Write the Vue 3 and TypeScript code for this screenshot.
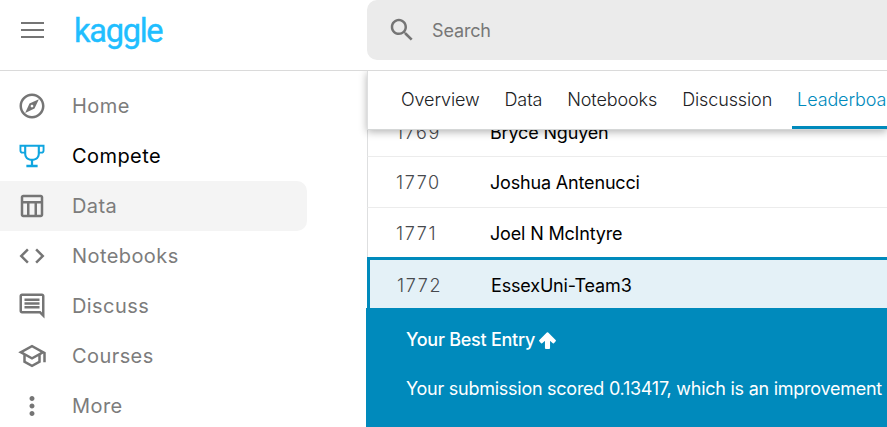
<script setup lang="ts">
interface NavItem {
  label: string
  icon: string
  state?: 'active' | 'hover'
}

interface Row {
  rank: number
  team: string
  own?: boolean
}

const navItems: NavItem[] = [
  {
    label: 'Home',
    icon: 'M12 2C6.48 2 2 6.48 2 12s4.48 10 10 10 10-4.48 10-10S17.52 2 12 2zm0 18c-4.41 0-8-3.59-8-8s3.59-8 8-8 8 3.59 8 8-3.59 8-8 8zm-5.5-2.5l7.51-3.49L17.5 6.5 9.99 9.99 6.5 17.5zm5.5-6.6c.61 0 1.1.49 1.1 1.1s-.49 1.1-1.1 1.1-1.1-.49-1.1-1.1.49-1.1 1.1-1.1z',
  },
  {
    label: 'Compete',
    state: 'active',
    icon: 'M2 3H22V7.5A2.5 2.5 0 0 1 19.5 10H18.3C18.2 13.4 16 15.6 12.9 15.8V19H16.5V21H7.5V19H11.1V15.8C8 15.6 5.8 13.4 5.7 10H4.5A2.5 2.5 0 0 1 2 7.5ZM7.4 4.6V10C7.4 12.7 9.1 14.2 12 14.2S16.6 12.7 16.6 10V4.6ZM3.5 4.6V7.5Q3.5 8.5 4.5 8.5H5.7V4.6ZM18.3 4.6V8.5H19.5Q20.5 8.5 20.5 7.5V4.6Z',
  },
  {
    label: 'Data',
    state: 'hover',
    icon: 'M19 3H5c-1.1 0-2 .9-2 2v14c0 1.1.9 2 2 2h14c1.1 0 2-.9 2-2V5c0-1.1-.9-2-2-2zm0 2v3H5V5h14zm-5 14h-4v-9h4v9zM5 10h3v9H5v-9zm11 9v-9h3v9h-3z',
  },
  {
    label: 'Notebooks',
    icon: 'M9.4 16.6L4.8 12l4.6-4.6L8 6l-6 6 6 6 1.4-1.4zm5.2 0l4.6-4.6-4.6-4.6L16 6l6 6-6 6-1.4-1.4z',
  },
  {
    label: 'Discuss',
    icon: 'M21.99 4c0-1.1-.89-2-1.99-2H4c-1.1 0-2 .9-2 2v12c0 1.1.9 2 2 2h14l4 4-.01-18zM20 4v13.17L18.83 16H4V4h16zM6 12h12v2H6zm0-3h12v2H6zm0-3h12v2H6z',
  },
  {
    label: 'Courses',
    icon: 'M12 3L1 9l4 2.18v6L12 21l7-3.82v-6l2-1.09V17h2V9L12 3zm6.82 6L12 12.72 5.18 9 12 5.28 18.82 9zM17 15.99l-5 2.73-5-2.73v-3.72L12 15l5-2.73v3.72z',
  },
  {
    label: 'More',
    icon: 'M12 8c1.1 0 2-.9 2-2s-.9-2-2-2-2 .9-2 2 .9 2 2 2zm0 2c-1.1 0-2 .9-2 2s.9 2 2 2 2-.9 2-2-.9-2-2-2zm0 6c-1.1 0-2 .9-2 2s.9 2 2 2 2-.9 2-2-.9-2-2-2z',
  },
]

const tabs: string[] = ['Overview', 'Data', 'Notebooks', 'Discussion', 'Leaderboard']
const activeTab = 'Leaderboard'

const rows: Row[] = [
  { rank: 1769, team: 'Bryce Nguyen' },
  { rank: 1770, team: 'Joshua Antenucci' },
  { rank: 1771, team: 'Joel N McIntyre' },
  { rank: 1772, team: 'EssexUni-Team3', own: true },
]
</script>

<template>
  <div class="page">
    <header class="header">
      <div class="brand">
        <svg class="menu" viewBox="0 0 24 18" aria-hidden="true">
          <path d="M1 2h23M1 9h23M1 16h23" />
        </svg>
        <span class="logo">kaggle</span>
      </div>
      <div class="search">
        <svg class="search-icon" viewBox="0 0 24 24" aria-hidden="true">
          <path d="M15.5 14h-.79l-.28-.27C15.41 12.59 16 11.11 16 9.5 16 5.91 13.09 3 9.5 3S3 5.91 3 9.5 5.91 16 9.5 16c1.61 0 3.09-.59 4.23-1.57l.27.28v.79l5 4.99L20.49 19l-4.99-5zm-6 0C7.01 14 5 11.99 5 9.5S7.01 5 9.5 5 14 7.01 14 9.5 11.99 14 9.5 14z" />
        </svg>
        <span class="search-label">Search</span>
      </div>
    </header>

    <div class="body">
      <nav class="sidebar">
        <a v-for="item in navItems" :key="item.label" class="nav-item" :class="item.state">
          <svg class="nav-icon" viewBox="0 0 24 24" aria-hidden="true">
            <path :d="item.icon" fill-rule="evenodd" />
          </svg>
          <span>{{ item.label }}</span>
        </a>
      </nav>

      <main class="main">
        <div class="tabs">
          <a v-for="tab in tabs" :key="tab" class="tab" :class="{ selected: tab === activeTab }">{{ tab }}</a>
        </div>
        <div class="board">
          <div v-for="row in rows" :key="row.rank" class="row" :class="{ own: row.own }">
            <span class="rank">{{ row.rank }}</span>
            <span class="team">{{ row.team }}</span>
          </div>
        </div>
        <section class="best">
          <p class="best-title">
            <span>Your Best Entry</span>
            <svg class="arrow" viewBox="0 0 16 16" aria-hidden="true">
              <path d="M8 1.2L15 8.2L13.6 9.8L9.5 6.4V15H6.5V6.4L2.4 9.8L1 8.2Z" />
            </svg>
          </p>
          <p class="best-text">Your submission scored 0.13417, which is an improvement</p>
        </section>
      </main>
    </div>
  </div>
</template>

<style>
body {
  margin: 0;
  background: #fff;
}
</style>

<style scoped>
.page {
  width: 100%;
  height: 427px;
  display: flex;
  flex-direction: column;
  overflow: hidden;
  background: #fff;
  font-family: Inter, "Liberation Sans", sans-serif;
}

.header {
  flex: none;
  display: flex;
  height: 70px;
  border-bottom: 1px solid #dadada;
}

.brand {
  flex: none;
  box-sizing: border-box;
  width: 367px;
  height: 60px;
  padding-left: 20px;
  display: flex;
  align-items: center;
}

.menu {
  width: 24px;
  height: 18px;
  fill: none;
  stroke: #757575;
  stroke-width: 2.2;
}

.logo {
  margin-left: 30px;
  padding-top: 1px;
  color: #20beff;
  font-family: Roboto, sans-serif;
  font-size: 32.5px;
  line-height: 58px;
  letter-spacing: -1.25px;
  -webkit-text-stroke: 0.4px #20beff;
}

.search {
  flex: 1;
  height: 60px;
  display: flex;
  align-items: center;
  border-radius: 10px 0 0 10px;
  background: #ebebeb;
}

.search-icon {
  width: 30px;
  height: 30px;
  margin-left: 20px;
  fill: #757575;
}

.search-label {
  margin-left: 15px;
  color: #777;
  font-size: 18px;
  letter-spacing: -0.15px;
}

.body {
  flex: 1;
  min-height: 0;
  display: flex;
}

.sidebar {
  flex: none;
  width: 366px;
  padding-top: 10px;
  box-sizing: border-box;
}

.nav-item {
  box-sizing: border-box;
  display: flex;
  align-items: center;
  width: 307px;
  height: 50px;
  padding-left: 17px;
  border-radius: 0 10px 10px 0;
  color: #7c7c7c;
  font-size: 20px;
  letter-spacing: 0.42px;
}

.nav-item.active {
  color: #000;
}

.nav-item.hover {
  background: #f4f4f4;
}

.nav-icon {
  flex: none;
  width: 30px;
  height: 30px;
  margin-right: 25px;
  fill: #757575;
}

.active .nav-icon {
  fill: #0fa5e0;
}

.main {
  flex: 1;
  min-width: 0;
  display: flex;
  flex-direction: column;
}

.tabs {
  position: relative;
  z-index: 1;
  flex: none;
  box-sizing: border-box;
  height: 59px;
  margin-left: 1px;
  padding-left: 28px;
  display: flex;
  gap: 15px;
  background: #fff;
  border-left: 1px solid #dedfe0;
  border-bottom: 1px solid #d5d7d7;
  box-shadow: 0 2px 8px rgba(0, 0, 0, 0.3);
  clip-path: inset(0 0 -20px -10px);
}

.tab {
  flex: none;
  padding: 0 5px;
  border-bottom: 3px solid transparent;
  color: #202124;
  font-size: 18px;
  font-weight: 300;
  letter-spacing: -0.12px;
  line-height: 58px;
  height: 55px;
}

.tab.selected {
  color: #008abc;
  border-bottom-color: #008abc;
}

.board {
  flex: none;
  height: 202px;
  margin: -24px 0 0 1px;
  overflow: hidden;
}

.row {
  box-sizing: border-box;
  display: flex;
  align-items: center;
  height: 51px;
  padding-left: 28px;
  border-left: 1px solid #dedfe0;
  border-bottom: 1px solid #ececec;
  font-size: 18px;
}

.row:first-child {
  padding-top: 2px;
}

.row:nth-child(3) {
  height: 49px;
  padding-top: 2px;
  border-bottom: 0;
}

.row.own {
  height: 60px;
  padding: 0 0 5px 27px;
  border-top: 3px solid #008abc;
  border-left: 3px solid #008abc;
  background: #e4f1f7;
}

.rank {
  width: 94px;
  color: #47494d;
  font-weight: 300;
  letter-spacing: 1.6px;
}

.team {
  color: #000;
  letter-spacing: -0.17px;
}

.best {
  flex: 1;
  padding: 20px 0 0 40px;
  background: #008abc;
  color: #fff;
  font-size: 18px;
  letter-spacing: -0.26px;
  white-space: nowrap;
}

.best-title {
  display: flex;
  align-items: center;
  margin: 0 0 25px;
  font-weight: 500;
  letter-spacing: -0.25px;
  line-height: 24px;
}

.arrow {
  width: 17px;
  height: 17px;
  margin-left: 4px;
  fill: #fff;
  stroke: #fff;
  stroke-width: 1.8;
  stroke-linejoin: round;
}

.best-text {
  margin: 0;
  line-height: 24px;
}
</style>
